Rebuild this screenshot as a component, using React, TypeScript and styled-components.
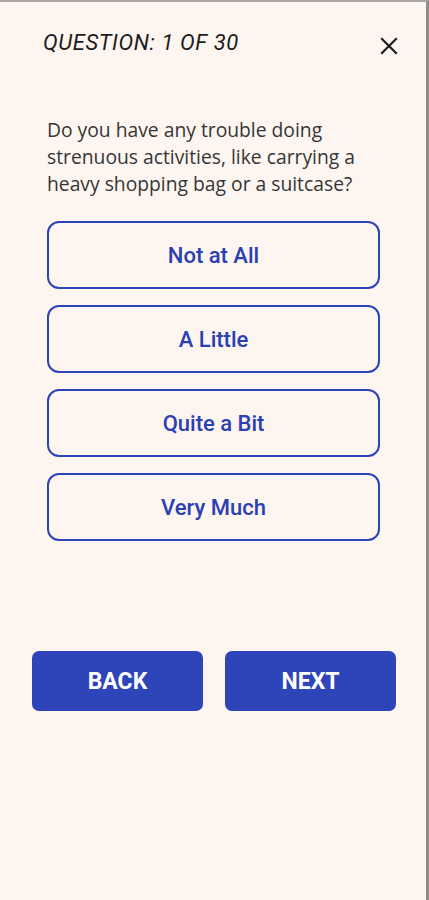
import styled, { createGlobalStyle } from 'styled-components';

const GlobalStyle = createGlobalStyle`
  html, body {
    margin: 0;
    padding: 0;
    background: #fcf5f0;
  }
  * {
    box-sizing: border-box;
  }
`;

const Screen = styled.div`
  width: 429px;
  height: 900px;
  background: #fcf5f0;
  border-top: 2px solid #a9a6a3;
  border-right: 3px solid #8f8c89;
  display: flex;
  flex-direction: column;
  font-family: Roboto, 'Liberation Sans', sans-serif;
`;

const Header = styled.header`
  display: flex;
  align-items: flex-start;
  justify-content: space-between;
  padding: 28px 27px 0 43px;
`;

const Title = styled.h1`
  margin: 0;
  font-size: 22px;
  line-height: 26px;
  font-weight: 400;
  font-style: italic;
  color: #1c1c1c;
  letter-spacing: 0.6px;
`;

const CloseButton = styled.button`
  border: none;
  background: none;
  padding: 0;
  width: 20px;
  height: 20px;
  display: flex;
  align-items: center;
  justify-content: center;
  margin-top: 6px;
  cursor: pointer;
`;

const Body = styled.main`
  display: flex;
  flex-direction: column;
  padding: 0 46px 0 47px;
  margin-top: 60px;
`;

const Question = styled.p`
  margin: 0 0 24px;
  font-family: 'Open Sans', Lato, sans-serif;
  font-size: 19.3px;
  line-height: 27px;
  color: #363636;
`;

const Options = styled.div`
  display: flex;
  flex-direction: column;
  gap: 16px;
`;

const Option = styled.button`
  height: 68px;
  width: 100%;
  border: 2.5px solid #2b44b6;
  border-radius: 12px;
  background: transparent;
  color: #2b40b3;
  font-family: Roboto, 'Liberation Sans', sans-serif;
  font-size: 22px;
  font-weight: 500;
  cursor: pointer;
`;

const Footer = styled.div`
  display: flex;
  gap: 22px;
  padding: 0 0 0 32px;
  margin-top: 110px;
`;

const NavButton = styled.button`
  width: 171px;
  height: 60px;
  border: none;
  border-radius: 7px;
  background: #2d45b9;
  color: #ffffff;
  font-family: Roboto, 'Liberation Sans', sans-serif;
  font-size: 23px;
  font-weight: 700;
  text-transform: uppercase;
  cursor: pointer;
`;

const answers = ['Not at All', 'A Little', 'Quite a Bit', 'Very Much'];

const App = () => {
  return (
    <>
      <GlobalStyle />
      <Screen>
        <Header>
          <Title>QUESTION: 1 OF 30</Title>
          <CloseButton aria-label="Close">
            <svg width="18" height="18" viewBox="0 0 18 18">
              <path d="M2 2 L16 16 M16 2 L2 16" stroke="#1c1c1c" strokeWidth="2.2" strokeLinecap="square" />
            </svg>
          </CloseButton>
        </Header>
        <Body>
          <Question>
            Do you have any trouble doing strenuous activities, like carrying a heavy shopping bag or a suitcase?
          </Question>
          <Options>
            {answers.map((a) => (
              <Option key={a}>{a}</Option>
            ))}
          </Options>
        </Body>
        <Footer>
          <NavButton>Back</NavButton>
          <NavButton>Next</NavButton>
        </Footer>
      </Screen>
    </>
  );
};

export default App;
